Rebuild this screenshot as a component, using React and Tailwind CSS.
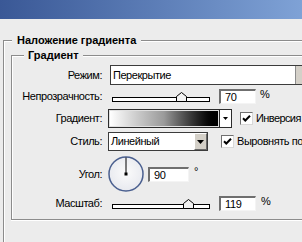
import React from 'react';

const font = { fontFamily: '"Liberation Sans", "DejaVu Sans", sans-serif' };

const Thumb = () => (
  <svg width="11" height="10" viewBox="0 0 11 10" className="block">
    <path d="M0.5 9.5 V4.5 L5.5 0.5 L10.5 4.5 V9.5 Z" fill="#f2f2f2" stroke="#000" />
  </svg>
);

const Slider = ({ pos }) => (
  // pos is 0..1 along the track
  <div className="relative w-[98px] h-[11px] flex items-end">
    <div className="w-full h-[5px] border border-black bg-white" />
    <div className="absolute bottom-0 -ml-[5px]" style={{ left: `${pos * 98}px` }}>
      <Thumb />
    </div>
  </div>
);

const NumBox = ({ value, w = 'w-[37px]' }) => (
  <div className={`${w} h-[15px] bg-white border-t-2 border-l-2 border-t-[#6f6f6f] border-l-[#6f6f6f] border-b border-r border-b-[#f4f4f4] border-r-[#f4f4f4] pl-[4px] text-[11px] leading-[12px] tracking-[-0.3px] text-black`}>
    {value}
  </div>
);

const Check = () => (
  <div className="w-[13px] h-[13px] bg-white border-t border-l border-t-[#707070] border-l-[#707070] border-b border-r border-b-[#d8d8d8] border-r-[#d8d8d8] flex items-center justify-center">
    <svg width="9" height="9" viewBox="0 0 9 9">
      <path d="M1 4.2 L3.3 6.5 L8 1.8" fill="none" stroke="#000" strokeWidth="2" />
    </svg>
  </div>
);

const Label = ({ children }) => (
  <div className="w-[90px] text-right text-[11px] leading-[13px] tracking-[-0.45px] text-black whitespace-nowrap">{children}</div>
);

export default function App() {
  return (
    <div className="w-[302px] h-[242px] overflow-hidden bg-[#ececec] select-none" style={font}>
      {/* title bar */}
      <div className="h-[19px] bg-gradient-to-r from-[#3a5896] to-[#7fa2d6]" />

      {/* outer group */}
      <div className="ml-[3px] mt-[21px] w-[340px] h-[260px] border-l border-t border-[#8c8c8c] shadow-[inset_1px_1px_0_#ffffff]">
        <div className="ml-[8px] -mt-[8px] w-fit bg-[#ececec] px-[5px] text-[11px] leading-[14px] font-bold text-black">
          Наложение градиента
        </div>

        {/* inner group */}
        <div className="ml-[7px] mt-[8px] w-[340px] border-l border-t border-b border-[#8c8c8c] shadow-[inset_1px_1px_0_#ffffff,0_1px_0_#ffffff] pb-[7px]">
          <div className="ml-[12px] -mt-[8px] w-fit bg-[#ececec] px-[4px] text-[11px] leading-[14px] font-bold text-black">
            Градиент
          </div>

          {/* Режим */}
          <div className="mt-[3px] h-[20px] flex items-center">
            <Label>Режим:</Label>
            <div className="ml-[8px] w-[200px] h-[20px] bg-white border border-[#3c3c3c] flex">
              <div className="flex-1 pl-[2px] text-[11px] leading-[18px] tracking-[-0.45px] text-black">Перекрытие</div>
              <div className="w-[14px] h-full bg-[#d4d0c8] border-l border-[#8c8c8c]" />
            </div>
          </div>

          {/* Непрозрачность */}
          <div className="mt-[3px] h-[16px] flex items-center">
            <Label>Непрозрачность:</Label>
            <div className="ml-[10px]">
              <Slider pos={0.7} />
            </div>
            <div className="ml-[9px]">
              <NumBox value="70" />
            </div>
            <div className="ml-[4px] self-start text-[11px] leading-[12px] text-black">%</div>
          </div>

          {/* Градиент */}
          <div className="mt-[5px] h-[19px] flex items-center">
            <Label>Градиент:</Label>
            <div className="ml-[6px] h-[19px] flex border border-[#2c2c2c]">
              <div className="w-[110px] h-full bg-gradient-to-r from-white via-[#9a9a9a] to-black border border-[#e0e0e0]" />
              <div className="w-[12px] h-full bg-white border-l border-[#2c2c2c] flex items-center justify-center">
                <svg width="5" height="3" viewBox="0 0 5 3"><path d="M0 0 H5 L2.5 3 Z" fill="#000" /></svg>
              </div>
            </div>
            <div className="ml-[8px]">
              <Check />
            </div>
            <div className="ml-[3px] text-[11px] tracking-[-0.6px] text-black whitespace-nowrap">Инверсия</div>
          </div>

          {/* Стиль */}
          <div className="mt-[4px] h-[19px] flex items-center">
            <Label>Стиль:</Label>
            <div className="ml-[6px] w-[100px] h-[19px] bg-white border border-[#3c3c3c] flex">
              <div className="flex-1 pl-[2px] text-[11px] leading-[17px] tracking-[-0.45px] text-black">Линейный</div>
              <div className="w-[13px] h-full bg-[#d4d0c8] border-t border-l border-t-white border-l-white border-b border-r border-b-[#6a6a6a] border-r-[#6a6a6a] flex items-center justify-center">
                <svg width="7" height="4" viewBox="0 0 7 4"><path d="M0 0 H7 L3.5 4 Z" fill="#000" /></svg>
              </div>
            </div>
            <div className="ml-[13px]">
              <Check />
            </div>
            <div className="ml-[3px] text-[11px] tracking-[-0.45px] text-black whitespace-nowrap">Выровнять по слою</div>
          </div>

          {/* Угол */}
          <div className="mt-[5px] h-[36px] flex items-center">
            <Label>Угол:</Label>
            <div className="ml-[6px]">
              <svg width="36" height="36" viewBox="0 0 36 36" className="block">
                <defs>
                  <radialGradient id="dial" cx="50%" cy="45%" r="60%">
                    <stop offset="0%" stopColor="#fbfbfb" />
                    <stop offset="100%" stopColor="#e6e8ee" />
                  </radialGradient>
                </defs>
                <circle cx="18" cy="18" r="17" fill="url(#dial)" stroke="#4b6090" strokeWidth="1.5" />
                <line x1="18" y1="18" x2="18" y2="1.5" stroke="#000" strokeWidth="1" />
                <rect x="16.5" y="16.5" width="3" height="3" fill="#000" />
              </svg>
            </div>
            <div className="ml-[4px]">
              <NumBox value="90" w="w-[41px]" />
            </div>
            <div className="ml-[5px] self-start mt-[10px] text-[11px] leading-[10px] text-black">°</div>
          </div>

          {/* Масштаб */}
          <div className="mt-[3px] h-[17px] flex items-center">
            <Label>Масштаб:</Label>
            <div className="ml-[10px]">
              <Slider pos={(119 - 10) / 140} />
            </div>
            <div className="ml-[9px]">
              <NumBox value="119" />
            </div>
            <div className="ml-[5px] self-start text-[11px] leading-[12px] text-black">%</div>
          </div>
        </div>
      </div>
    </div>
  );
}
